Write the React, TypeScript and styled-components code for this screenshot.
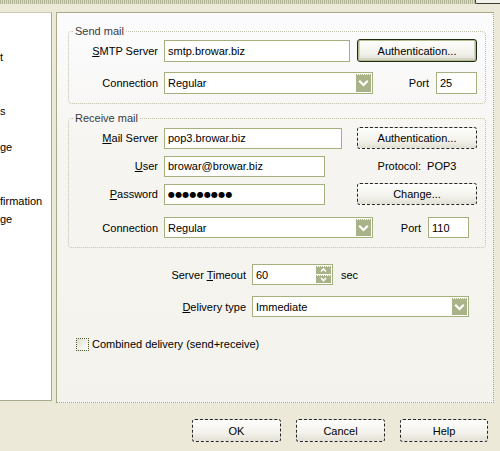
import React from "react";
import styled, { createGlobalStyle, css } from "styled-components";

const Global = createGlobalStyle`
  html, body { margin: 0; padding: 0; }
  body {
    background: #ece9d8;
    font-family: "Liberation Sans", Arial, sans-serif;
    font-size: 11px;
    color: #000;
    width: 500px;
    height: 451px;
    overflow: hidden;
  }
`;

const Window = styled.div`
  width: 500px;
  height: 451px;
  display: flex;
  flex-direction: column;
  background: #ece9d8;
`;

const TopStrip = styled.div`
  height: 4px;
  display: flex;
  justify-content: flex-end;
  background: repeating-linear-gradient(90deg, #b3b799 0 1px, #dddccb 1px 2px);
`;

const TopKnob = styled.div`
  width: 24px;
  height: 3px;
  background: #f3f2ea;
  border-left: 1px solid #3a3a3a;
  border-bottom: 1px solid #3a3a3a;
  border-bottom-left-radius: 2px;
`;

const Main = styled.div`
  display: flex;
  align-items: flex-start;
  margin-top: 8px;
`;

const TreePane = styled.div`
  width: 52px;
  height: 389px;
  box-sizing: border-box;
  background: #fff;
  border-top: 1px solid #c9cbb5;
  border-right: 1px solid #a5ac87;
  border-bottom: 1px solid #a5ac87;
  overflow: hidden;
  padding-top: 35px;
  display: flex;
  flex-direction: column;
`;

const TreeItem = styled.div`
  height: 18px;
  line-height: 18px;
  white-space: nowrap;
`;

const Page = styled.div`
  margin-left: 4px;
  width: 438px;
  height: 391px;
  box-sizing: border-box;
  border-left: 1px solid #a5ac87;
  border-top: 1px solid #a5ac87;
  border-right: 1px dotted #9ea77b;
  border-bottom: 1px dotted #9ea77b;
  background: linear-gradient(to bottom, #fcfcfe 0%, #f6f5f1 35%, #f3f2ec 100%);
  padding: 12px 0 0 11px;
  display: flex;
  flex-direction: column;
`;

const Group = styled.fieldset<{ $mt?: number }>`
  margin: ${(p) => p.$mt ?? 0}px 0 0 0;
  padding: 2px 8px 9px 0;
  width: 418px;
  box-sizing: border-box;
  min-width: 0;
  border: 1px dotted #c0c2a8;
  border-radius: 4px;
  display: flex;
  flex-direction: column;
`;

const Legend = styled.legend`
  margin-left: 5px;
  padding: 0 1px;
  line-height: 12px;
  height: 12px;
  color: #3a3a3a;
`;

const Row = styled.div<{ $mt?: number; $h: number }>`
  display: flex;
  align-items: center;
  height: ${(p) => p.$h}px;
  margin-top: ${(p) => p.$mt ?? 0}px;
`;

const Label = styled.span<{ $w: number }>`
  flex: none;
  width: ${(p) => p.$w}px;
  margin-right: 6px;
  text-align: right;
  white-space: nowrap;
`;

const boxBase = css`
  flex: none;
  box-sizing: border-box;
  background: #fff;
  border: 1px solid #a5b07e;
  display: flex;
  align-items: center;
`;

const Field = styled.div<{ $w: number; $h: number }>`
  ${boxBase};
  width: ${(p) => p.$w}px;
  height: ${(p) => p.$h}px;
  padding-left: 3px;
  white-space: nowrap;
  overflow: hidden;
`;

const Dots = styled.span`
  font-family: "DejaVu Sans", sans-serif;
  font-size: 8px;
  letter-spacing: 0.2px;
`;

const SelectBox = styled.div<{ $w: number; $h: number }>`
  ${boxBase};
  width: ${(p) => p.$w}px;
  height: ${(p) => p.$h}px;
  padding: 1px 1px 1px 3px;
  justify-content: space-between;
`;

const DropBtn = styled.div`
  flex: none;
  width: 15px;
  height: 100%;
  background: #a8b389;
  display: flex;
  align-items: center;
  justify-content: center;
`;

const SpinBtns = styled.div`
  flex: none;
  width: 15px;
  height: 100%;
  display: flex;
  flex-direction: column;
  gap: 1px;
`;

const SpinHalf = styled.div`
  flex: 1;
  background: #a8b389;
  display: flex;
  align-items: center;
  justify-content: center;
`;

const Button = styled.button<{ $w: number; $h?: number; $default?: boolean }>`
  flex: none;
  width: ${(p) => p.$w}px;
  height: ${(p) => p.$h ?? 22}px;
  margin: 0;
  padding: 0;
  font-family: "Liberation Sans", Arial, sans-serif;
  font-size: 11px;
  color: #000;
  box-sizing: border-box;
  border: 1px dashed #262626;
  border-radius: 3px;
  background: linear-gradient(to bottom, #fefefd 0%, #f3f2ec 60%, #e3e0d4 100%);
  ${(p) =>
    p.$default &&
    css`
      border: 1px solid #1e2a10;
      box-shadow: inset 0 0 0 1px #b3bc8e, inset 0 -1px 0 2px #d4d3c4;
    `}
`;

const Spacer = styled.div`
  flex: 1;
`;

const Side = styled.div<{ $w: number }>`
  flex: none;
  width: ${(p) => p.$w}px;
  text-align: center;
  white-space: pre;
`;

const PortLabel = styled.span`
  margin-right: 7px;
`;

const PortWrap = styled.div<{ $mr?: number }>`
  display: flex;
  align-items: center;
  margin-left: auto;
  margin-right: ${(p) => p.$mr ?? 0}px;
`;

const Unit = styled.span`
  margin-left: 8px;
`;

const CheckRow = styled.label`
  display: flex;
  align-items: center;
  height: 14px;
  margin-top: 20px;
  margin-left: 8px;
  gap: 3px;
`;

const CheckBox = styled.span`
  width: 13px;
  height: 13px;
  box-sizing: border-box;
  border: 1px dotted #4e5a30;
  background: linear-gradient(135deg, #dcdcd0 0%, #f4f4ee 60%, #ffffff 100%);
`;

const ButtonBar = styled.div`
  display: flex;
  justify-content: flex-end;
  gap: 15px;
  padding-right: 12px;
  margin-top: 16px;
`;

const Chevron = () => (
  <svg width="15" height="18" viewBox="0 0 15 18">
    <line x1="1" y1="0.5" x2="14" y2="0.5" stroke="#ffffff" strokeDasharray="1 1" />
    <path d="M4 7.5 L7.5 11 L11 7.5" fill="none" stroke="#ffffff" strokeWidth="2.2" strokeLinecap="square" />
  </svg>
);

const Drop = () => (
  <DropBtn>
    <Chevron />
  </DropBtn>
);

const Arrow = ({ up }: { up?: boolean }) => (
  <svg width="15" height="8" viewBox="0 0 15 8">
    <line x1="1" y1="0.5" x2="14" y2="0.5" stroke="#ffffff" strokeDasharray="1 1" />
    <path
      d={up ? "M5 5.5 L7.5 3 L10 5.5" : "M5 3 L7.5 5.5 L10 3"}
      fill="none"
      stroke="#ffffff"
      strokeWidth="1.6"
    />
  </svg>
);

const treeItems = ["t", "", "", "s", "", "ge", "", "", "firmation", "ge"];

export default function App() {
  return (
    <Window>
      <Global />
      <TopStrip>
        <TopKnob />
      </TopStrip>
      <Main>
        <TreePane>
          {treeItems.map((t, i) => (
            <TreeItem key={i}>{t}</TreeItem>
          ))}
        </TreePane>
        <Page>
          <Group>
            <Legend>Send mail</Legend>
            <Row $h={23}>
              <Label $w={89}>
                <u>S</u>MTP Server
              </Label>
              <Field $w={186} $h={22}>smtp.browar.biz</Field>
              <Spacer />
              <Button $w={120} $h={23} $default>
                Authentication...
              </Button>
            </Row>
            <Row $h={22} $mt={10}>
              <Label $w={89}>Connection</Label>
              <SelectBox $w={209} $h={22}>
                <span>Regular</span>
                <Drop />
              </SelectBox>
              <PortWrap>
                <PortLabel>Port</PortLabel>
                <Field $w={41} $h={22}>25</Field>
              </PortWrap>
            </Row>
          </Group>

          <Group $mt={8}>
            <Legend>Receive mail</Legend>
            <Row $h={22} $mt={1}>
              <Label $w={89}>
                <u>M</u>ail Server
              </Label>
              <Field $w={178} $h={21}>pop3.browar.biz</Field>
              <Spacer />
              <Button $w={120}>Authentication...</Button>
            </Row>
            <Row $h={20} $mt={7}>
              <Label $w={89}>
                <u>U</u>ser
              </Label>
              <Field $w={161} $h={21}>browar@browar.biz</Field>
              <Spacer />
              <Side $w={120}>{"Protocol:  POP3"}</Side>
            </Row>
            <Row $h={22} $mt={7}>
              <Label $w={89}>
                <u>P</u>assword
              </Label>
              <Field $w={161} $h={21}>
                <Dots>●●●●●●●●●</Dots>
              </Field>
              <Spacer />
              <Button $w={120}>Change...</Button>
            </Row>
            <Row $h={21} $mt={12}>
              <Label $w={89}>Connection</Label>
              <SelectBox $w={209} $h={21}>
                <span>Regular</span>
                <Drop />
              </SelectBox>
              <PortWrap $mr={8}>
                <PortLabel>Port</PortLabel>
                <Field $w={41} $h={21}>110</Field>
              </PortWrap>
            </Row>
          </Group>

          <Row $h={21} $mt={16}>
            <Label $w={178}>
              Server <u>T</u>imeout
            </Label>
            <SelectBox $w={81} $h={21}>
              <span>60</span>
              <SpinBtns>
                <SpinHalf>
                  <Arrow up />
                </SpinHalf>
                <SpinHalf>
                  <Arrow />
                </SpinHalf>
              </SpinBtns>
            </SelectBox>
            <Unit>sec</Unit>
          </Row>
          <Row $h={21} $mt={11}>
            <Label $w={178}>
              <u>D</u>elivery type
            </Label>
            <SelectBox $w={217} $h={21}>
              <span>Immediate</span>
              <Drop />
            </SelectBox>
          </Row>
          <CheckRow>
            <CheckBox />
            <span>Combined delivery (send+receive)</span>
          </CheckRow>
        </Page>
      </Main>
      <ButtonBar>
        <Button $w={89} $h={23}>OK</Button>
        <Button $w={89} $h={23}>Cancel</Button>
        <Button $w={88} $h={23}>Help</Button>
      </ButtonBar>
    </Window>
  );
}
